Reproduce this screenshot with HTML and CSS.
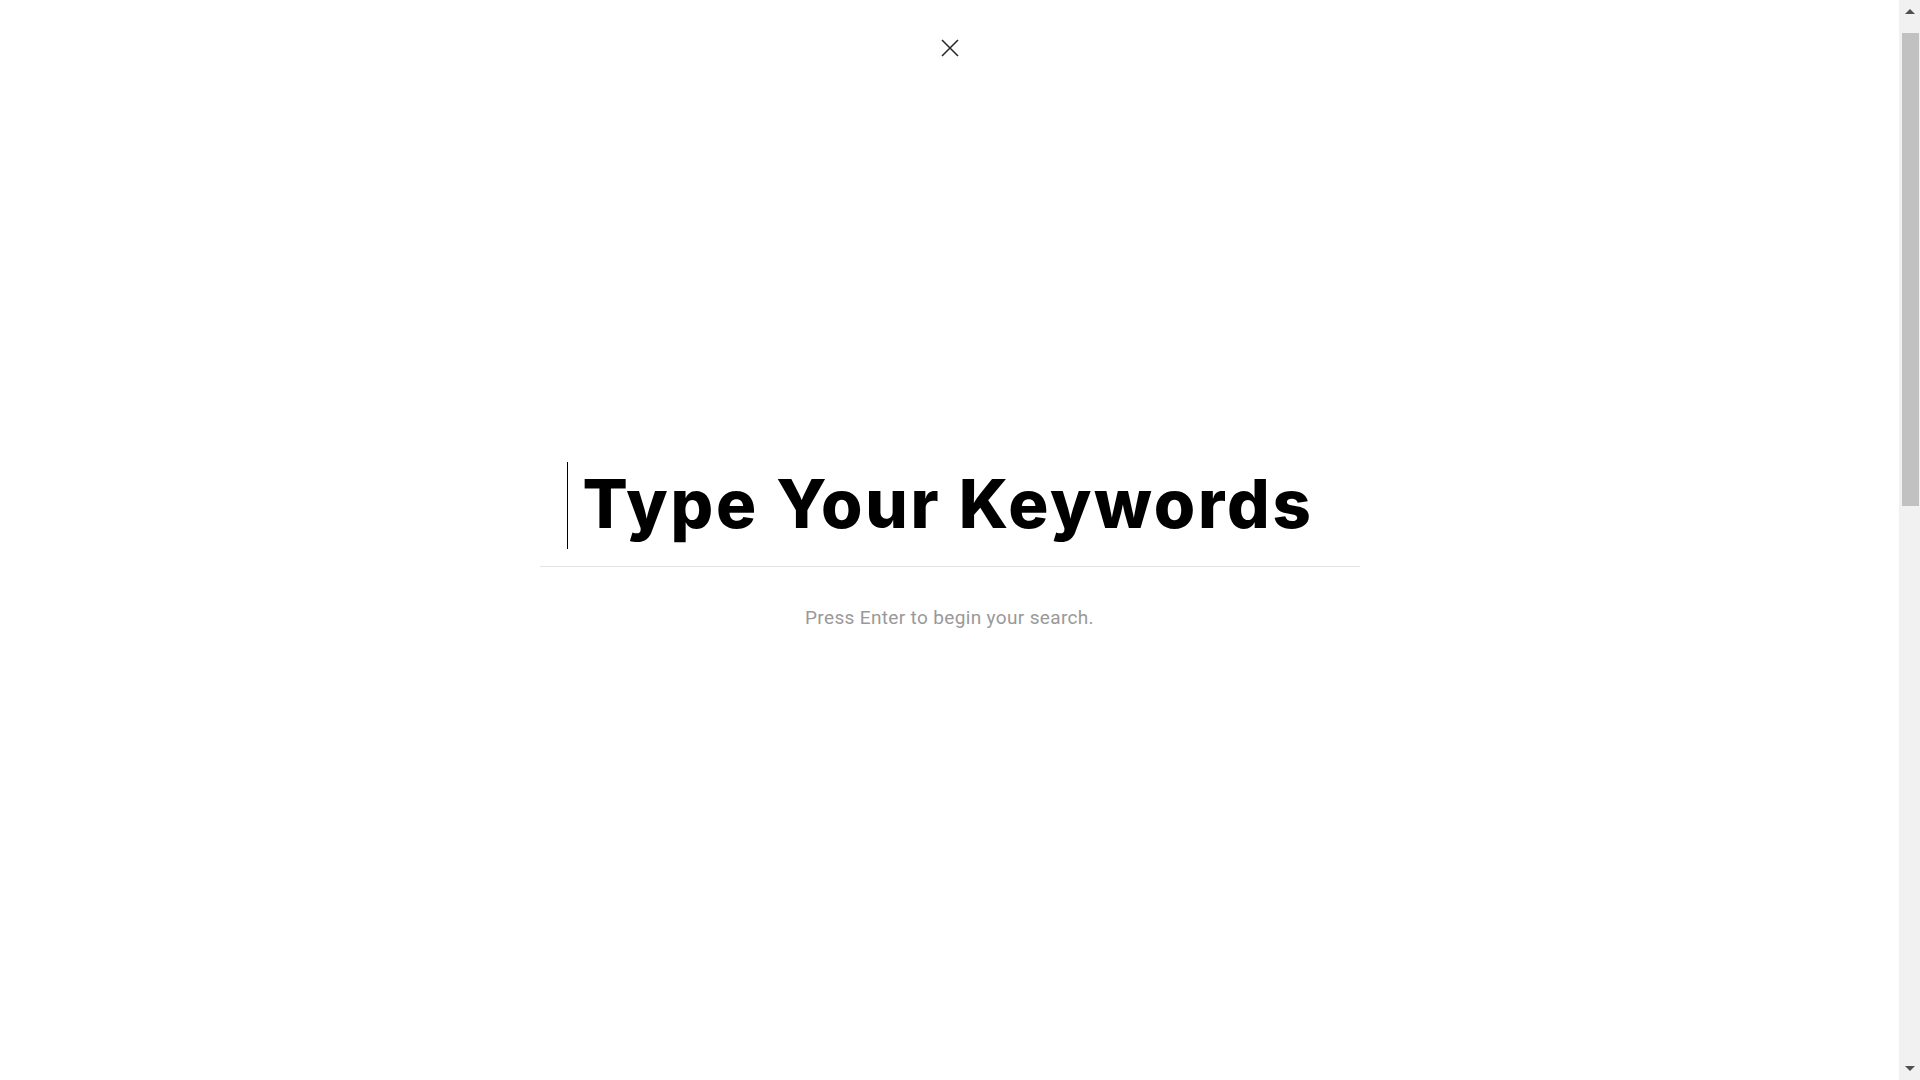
FILE: index.html
```html
<!DOCTYPE html>
<html lang="en">
<head>
<meta charset="utf-8">
<title>Search</title>
<link rel="stylesheet" href="styles.css">
</head>
<body>
<div class="page">
  <div class="overlay">
    <button class="close" type="button" aria-label="Close">
      <svg width="18" height="18" viewBox="0 0 18 18" aria-hidden="true">
        <path d="M1 1 L17 17 M17 1 L1 17" stroke="#2b2b2b" stroke-width="1.6" fill="none"/>
      </svg>
    </button>
    <form class="search">
      <div class="field">
        <span class="caret"></span>
        <span class="placeholder">Type Your Keywords</span>
      </div>
      <p class="hint">Press Enter to begin your search.</p>
    </form>
  </div>
  <div class="page-rest"></div>
</div>
<div class="scrollbar" aria-hidden="true">
  <span class="sb-arrow sb-up"></span>
  <span class="sb-thumb"></span>
  <span class="sb-fill"></span>
  <span class="sb-arrow sb-down"></span>
</div>
</body>
</html>
```

FILE: styles.css
```css
html, body {
  margin: 0;
  padding: 0;
  background: #fff;
}

body {
  font-family: "Inter", "Liberation Sans", sans-serif;
  color: #000;
}

.page {
  margin-right: 21px;
}

.overlay {
  height: 1080px;
  display: flex;
  flex-direction: column;
  align-items: center;
}

.close {
  margin-top: 39px;
  width: 18px;
  height: 18px;
  padding: 0;
  border: 0;
  background: none;
  display: flex;
  cursor: pointer;
}

.search {
  margin: 405px 0 0;
  width: 820px;
  display: flex;
  flex-direction: column;
  align-items: center;
}

.field {
  width: 100%;
  box-sizing: border-box;
  padding: 0 0 17px 27px;
  border-bottom: 1px solid #e3e3e3;
  display: flex;
  align-items: flex-start;
}

.caret {
  width: 1px;
  height: 87px;
  background: #000;
  flex: none;
}

.placeholder {
  margin-left: 15px;
  font-family: "Inter", sans-serif;
  font-weight: 800;
  font-size: 67px;
  line-height: 84px;
  letter-spacing: 2.7px;
  white-space: nowrap;
}

.hint {
  margin: 40px 0 0;
  font-family: "Roboto", "Liberation Sans", sans-serif;
  font-size: 19px;
  line-height: 21px;
  letter-spacing: 0.35px;
  color: #999;
}

.page-rest {
  height: 1270px;
}

/* imitation of the browser scrollbar visible in the capture */
.scrollbar {
  position: fixed;
  top: 0;
  right: 0;
  width: 21px;
  height: 100vh;
  background: #f1f1f1;
  display: flex;
  flex-direction: column;
  align-items: center;
}

.sb-arrow {
  flex: none;
  width: 0;
  height: 0;
  border-left: 5px solid transparent;
  border-right: 5px solid transparent;
}

.sb-up {
  margin-top: 9px;
  border-bottom: 5px solid #505050;
}

.sb-down {
  margin: 0 0 9px;
  border-top: 5px solid #505050;
}

.sb-thumb {
  flex: none;
  margin-top: 19px;
  margin-left: 1px;
  width: 17px;
  height: 473px;
  background: #c1c1c1;
}

.sb-fill {
  flex: 1;
}
```
